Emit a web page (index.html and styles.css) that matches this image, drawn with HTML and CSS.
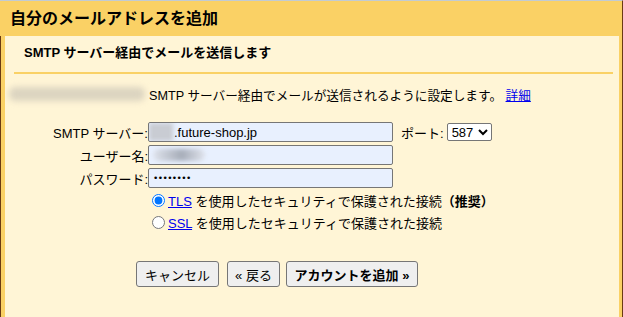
FILE: index.html
```html
<!DOCTYPE html>
<html lang="ja">

<head>
  <meta charset="UTF-8" />
  <title>自分のメールアドレスを追加</title>
  <link rel="stylesheet" href="styles.css">
</head>

<body>
  <div class="dialog">
    <div class="title">自分のメールアドレスを追加</div>

    <div class="frame">
      <div class="panel">
        <h2 class="subtitle">SMTP サーバー経由でメールを送信します</h2>

        <p class="intro">
          <span class="blur-email"></span>SMTP サーバー経由でメールが送信されるように設定します。&nbsp;<a href="#">詳細</a>
        </p>

        <div class="form">
          <div class="row">
            <label class="label">SMTP サーバー:</label>
            <div class="field">
              <span class="fake-input"><span class="blur-host"></span>.future-shop.jp</span>
            </div>
            <span class="port-label">ポート:</span>
            <select class="port">
              <option>587</option>
            </select>
          </div>
          <div class="row">
            <label class="label">ユーザー名:</label>
            <div class="field">
              <span class="fake-input"><span class="blur-user"></span></span>
            </div>
          </div>
          <div class="row">
            <label class="label">パスワード:</label>
            <div class="field">
              <span class="fake-input dots">••••••••</span>
            </div>
          </div>

          <div class="radio-row">
            <input type="radio" name="sec" checked>
            <span><a href="#">TLS</a> を使用したセキュリティで保護された接続<b>（推奨）</b></span>
          </div>
          <div class="radio-row">
            <input type="radio" name="sec">
            <span><a href="#">SSL</a> を使用したセキュリティで保護された接続</span>
          </div>
        </div>

        <div class="actions">
          <button class="btn btn-cancel">キャンセル</button>
          <button class="btn btn-back">« 戻る</button>
          <button class="btn btn-add">アカウントを追加 »</button>
        </div>
      </div>
    </div>
  </div>
</body>

</html>
```

FILE: styles.css
```css
* {
  margin: 0;
  padding: 0;
  box-sizing: border-box;
}

html,
body {
  height: 100%;
  font-family: "Liberation Sans", "Noto Sans CJK JP", sans-serif;
  font-size: 13px;
  color: #000;
}

.dialog {
  height: 317px;
  display: flex;
  flex-direction: column;
  background-color: #fad165;
  border-top: 1px solid #c2cbd2;
  border-right: 1px solid #6a3a12;
}

.title {
  height: 35px;
  line-height: 35px;
  padding-left: 10px;
  font-size: 16px;
  font-weight: bold;
}

.frame {
  flex: 1;
  display: flex;
  padding: 0 3px 0 4px;
  border-left: 1px solid #6a3a12;
}

.panel {
  flex: 1;
  background-color: #fff5d6;
  padding-left: 3px;
}

.subtitle {
  margin: 0 6px;
  padding: 9px 0 11px 10px;
  line-height: 16px;
  font-size: 13px;
  font-weight: bold;
  border-bottom: 2px solid #fad165;
}

.intro {
  display: flex;
  align-items: center;
  margin-top: 10px;
  height: 20px;
  font-size: 12.65px;
  white-space: nowrap;
}

.blur-email {
  width: 136px;
  height: 14px;
  margin: 0 4px 0 1px;
  background-color: #dcd4c0;
  border-radius: 6px;
  filter: blur(3px);
}

.intro a,
.radio-row a {
  color: #0000ee;
}

.form {
  margin-top: 18px;
  display: flex;
  flex-direction: column;
  gap: 3px;
}

.row {
  display: flex;
  align-items: center;
  height: 20px;
}

.label {
  width: 140px;
  text-align: right;
}

.field {
  width: 245px;
}

.fake-input {
  display: flex;
  align-items: center;
  height: 20px;
  border: 1px solid #767676;
  border-radius: 2px;
  background-color: #e8f0fe;
  overflow: hidden;
}

.blur-host {
  width: 24px;
  height: 18px;
  margin-right: 1px;
  background-color: #c9ccd3;
  filter: blur(2px);
}

.blur-user {
  width: 52px;
  height: 12px;
  margin-left: 4px;
  background: linear-gradient(to right, #dfe3ec, #a7adb9 55%, #dfe3ec);
  border-radius: 6px;
  filter: blur(2px);
}

.dots {
  padding-left: 4px;
  font-family: "DejaVu Sans", sans-serif;
  font-size: 9px;
  letter-spacing: -0.6px;
}

.port-label {
  margin-left: 8px;
}

.port {
  margin-left: 3px;
  width: 45px;
  height: 18px;
  font-family: "Liberation Sans", sans-serif;
  font-size: 13px;
  border: 1px solid #767676;
  border-radius: 2px;
  background-color: #fff;
}

.radio-row {
  display: flex;
  align-items: center;
  height: 20px;
  margin-left: 140px;
  margin-top: -1px;
  white-space: nowrap;
}

.radio-row:first-of-type {
  margin-top: 0;
}

.radio-row input {
  width: 13px;
  height: 13px;
  margin: 0 3px 0 4px;
}

.actions {
  display: flex;
  gap: 8px;
  margin-top: 29px;
  padding-left: 128px;
}

.btn {
  height: 26px;
  font-family: "Liberation Sans", "Noto Sans CJK JP", sans-serif;
  font-size: 13px;
  color: #000;
  background-color: #efefef;
  border: 1px solid #767676;
  border-radius: 3px;
  padding: 0;
  white-space: nowrap;
}

.btn-cancel {
  width: 83px;
}

.btn-back {
  width: 53px;
}

.btn-add {
  width: 132px;
  margin-left: -2px;
  font-weight: bold;
}
```
